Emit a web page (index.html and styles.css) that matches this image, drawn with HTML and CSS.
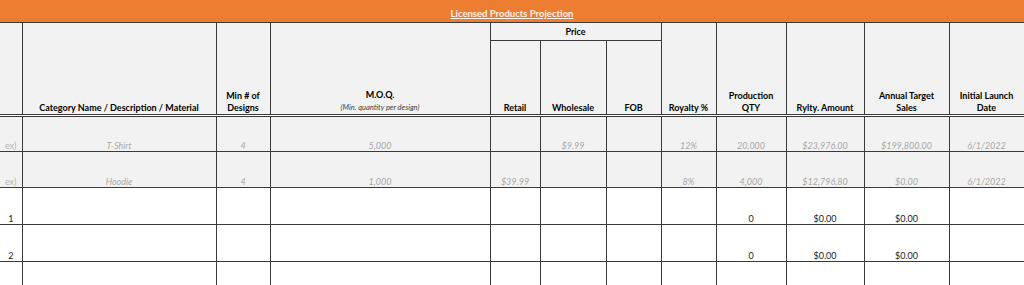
FILE: index.html
```html
<!DOCTYPE html>
<html lang="en">
<head>
<meta charset="utf-8">
<title>Licensed Products Projection</title>
<link rel="stylesheet" href="styles.css">
</head>
<body>
<div class="sheet">
  <div class="title-bar"><span class="title">Licensed Products Projection</span></div>
  <table class="grid">
    <colgroup>
      <col class="c-idx"><col class="c-cat"><col class="c-min"><col class="c-moq">
      <col class="c-retail"><col class="c-whole"><col class="c-fob"><col class="c-roy">
      <col class="c-qty"><col class="c-amt"><col class="c-sales"><col class="c-date">
    </colgroup>
    <thead>
      <tr class="h1">
        <th rowspan="2" class="idx"></th>
        <th rowspan="2">Category Name / Description / Material</th>
        <th rowspan="2">Min # of<br>Designs</th>
        <th rowspan="2">M.O.Q.<br><span class="sub">(Min. quantity per design)</span></th>
        <th colspan="3" class="price">Price</th>
        <th rowspan="2">Royalty %</th>
        <th rowspan="2">Production<br>QTY</th>
        <th rowspan="2">Rylty. Amount</th>
        <th rowspan="2">Annual Target<br>Sales</th>
        <th rowspan="2">Initial Launch<br>Date</th>
      </tr>
      <tr class="h2">
        <th>Retail</th>
        <th>Wholesale</th>
        <th>FOB</th>
      </tr>
    </thead>
    <tbody>
      <tr class="ex">
        <td class="idx right">ex)</td>
        <td>T-Shirt</td>
        <td>4</td>
        <td>5,000</td>
        <td></td>
        <td>$9.99</td>
        <td></td>
        <td>12%</td>
        <td>20,000</td>
        <td>$23,976.00</td>
        <td>$199,800.00</td>
        <td>6/1/2022</td>
      </tr>
      <tr class="ex">
        <td class="idx right">ex)</td>
        <td>Hoodie</td>
        <td>4</td>
        <td>1,000</td>
        <td>$39.99</td>
        <td></td>
        <td></td>
        <td>8%</td>
        <td>4,000</td>
        <td>$12,796.80</td>
        <td>$0.00</td>
        <td>6/1/2022</td>
      </tr>
      <tr class="row">
        <td class="idx">1</td>
        <td></td><td></td><td></td><td></td><td></td><td></td><td></td>
        <td>0</td>
        <td>$0.00</td>
        <td>$0.00</td>
        <td></td>
      </tr>
      <tr class="row">
        <td class="idx">2</td>
        <td></td><td></td><td></td><td></td><td></td><td></td><td></td>
        <td>0</td>
        <td>$0.00</td>
        <td>$0.00</td>
        <td></td>
      </tr>
      <tr class="row">
        <td class="idx"></td>
        <td></td><td></td><td></td><td></td><td></td><td></td><td></td>
        <td></td><td></td><td></td><td></td>
      </tr>
    </tbody>
  </table>
</div>
</body>
</html>
```

FILE: styles.css
```css
html, body {
  margin: 0;
  padding: 0;
  background: #ffffff;
}

.sheet {
  width: 1024px;
  font-family: Lato, "Open Sans", "Liberation Sans", sans-serif;
  color: #000;
}

.title-bar {
  height: 22px;
  background: #ed7d31;
  display: flex;
  align-items: flex-end;
  justify-content: center;
  box-sizing: border-box;
  padding-bottom: 2px;
}

.title {
  color: #fdf1e8;
  font-size: 9.5px;
  font-weight: 700;
  text-decoration: underline;
  line-height: 12px;
}

.grid {
  width: 1024px;
  table-layout: fixed;
  border-collapse: collapse;
}

.c-idx { width: 22px; }
.c-cat { width: 194px; }
.c-min { width: 54px; }
.c-moq { width: 220px; }
.c-retail { width: 50px; }
.c-whole { width: 66px; }
.c-fob { width: 55px; }
.c-roy { width: 55px; }
.c-qty { width: 70px; }
.c-amt { width: 78px; }
.c-sales { width: 85px; }
.c-date { width: 75px; }

.grid th,
.grid td {
  border: 1px solid #3a3a3a;
  padding: 0 2px 0;
  text-align: center;
  vertical-align: bottom;
  overflow: hidden;
  white-space: nowrap;
}

.grid th {
  background: #f2f2f2;
  font-size: 9px;
  font-weight: 700;
  line-height: 12px;
}

.grid tr.h1 { height: 18px; }
.grid tr.h2 { height: 75px; }

.grid th.price {
  vertical-align: middle;
  padding-bottom: 0;
}

.grid tr.h2 th,
.grid tr.h1 th[rowspan] {
  border-bottom: 3px double #3a3a3a;
}

.grid .idx {
  border-left: none;
}

.sub {
  font-size: 7.5px;
  font-weight: 400;
  font-style: italic;
  color: #404040;
}

.grid td {
  font-size: 9px;
  line-height: 11px;
  height: 36px;
  box-sizing: border-box;
  padding-bottom: 0;
}

.grid tr.ex td {
  background: #f2f2f2;
  color: #a8a8a8;
  font-style: italic;
}

.grid tr.ex td.idx {
  font-style: normal;
  color: #b4b4b4;
}

.grid td.right {
  text-align: right;
  padding-right: 5px;
}

.grid tr.row td {
  color: #1a1a1a;
  height: 37px;
}
```
